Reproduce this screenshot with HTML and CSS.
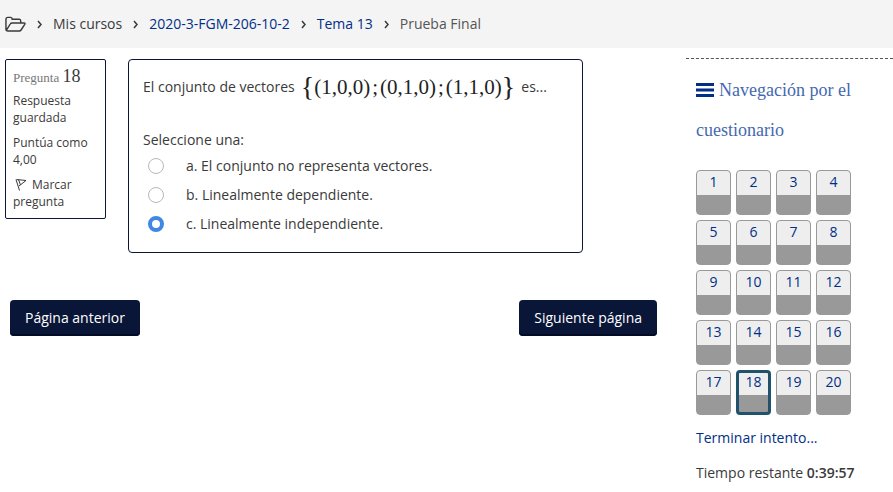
FILE: index.html
```html
<!DOCTYPE html>
<html lang="es">
<head>
<meta charset="utf-8">
<meta name="viewport" content="width=device-width, initial-scale=1">
<title>Prueba Final</title>
<link rel="stylesheet" href="styles.css">
</head>
<body>
<nav class="breadcrumb" aria-label="Ruta">
  <svg class="folder" viewBox="0 0 22 17" aria-hidden="true"><path d="M1 14V3Q1 1 3 1h3q1.500 0 1.500 2h7.500q1.500 0 1.500 2v2M1.500 14.500 5.500 8Q6 7 7.500 7H20q1.500 0 .7 1.300L17 14q-.8 1.300-2 1.300H3q-2 0-2-2"/></svg>
  <svg class="chevron" viewBox="0 0 5 9" aria-hidden="true"><path d="m1 1 3 3.500L1 8"/></svg>
  <span>Mis cursos</span>
  <svg class="chevron" viewBox="0 0 5 9" aria-hidden="true"><path d="m1 1 3 3.500L1 8"/></svg>
  <a href="#curso">2020-3-FGM-206-10-2</a>
  <svg class="chevron" viewBox="0 0 5 9" aria-hidden="true"><path d="m1 1 3 3.500L1 8"/></svg>
  <a href="#tema">Tema 13</a>
  <svg class="chevron" viewBox="0 0 5 9" aria-hidden="true"><path d="m1 1 3 3.500L1 8"/></svg>
  <span class="current">Prueba Final</span>
</nav>
<div class="page">
  <main>
    <form>
      <div class="question">
        <section class="info">
          <h3>Pregunta <span>18</span></h3>
          <p>Respuesta guardada</p>
          <p>Puntúa como 4,00</p>
          <p><svg class="flag" viewBox="0 0 12 13" aria-hidden="true"><path d="M1 1.500 4.500 12.500M1.500 1.500 11 2.500 4 8M3.500 1.500 5.500 7"/></svg>Marcar pregunta</p>
        </section>
        <fieldset class="content">
          <p class="statement">El conjunto de vectores <span class="formula"><span class="brace">{</span>(1,0,0)<i>;</i>(0,1,0)<i>;</i>(1,1,0)<span class="brace">}</span></span> es...</p>
          <p class="prompt">Seleccione una:</p>
          <label class="option"><input type="radio" name="answer"><span>a. El conjunto no representa vectores.</span></label>
          <label class="option"><input type="radio" name="answer"><span>b. Linealmente dependiente.</span></label>
          <label class="option"><input type="radio" name="answer" checked><span>c. Linealmente independiente.</span></label>
        </fieldset>
      </div>
      <div class="actions">
        <button type="button">Página anterior</button>
        <button type="button">Siguiente página</button>
      </div>
    </form>
  </main>
  <aside>
    <h2><svg class="bars" viewBox="0 0 18 14" aria-hidden="true"><path d="M0 0h18v3H0zM0 5.500h18v3H0zM0 11h18v3H0z"/></svg>Navegación por el cuestionario</h2>
    <div class="numbers">
      <a href="#1">1</a><a href="#2">2</a><a href="#3">3</a><a href="#4">4</a>
      <a href="#5">5</a><a href="#6">6</a><a href="#7">7</a><a href="#8">8</a>
      <a href="#9">9</a><a href="#10">10</a><a href="#11">11</a><a href="#12">12</a>
      <a href="#13">13</a><a href="#14">14</a><a href="#15">15</a><a href="#16">16</a>
      <a href="#17">17</a><a href="#18" class="active" aria-current="page">18</a><a href="#19">19</a><a href="#20">20</a>
    </div>
    <a class="finish" href="#terminar">Terminar intento...</a>
    <p class="timer">Tiempo restante <b>0:39:57</b></p>
  </aside>
</div>
</body>
</html>
```
FILE: styles.css
```css
* { box-sizing: border-box; }
body {
  margin: 0;
  background: #fff;
  color: #3a3a3a;
  font: 14px/20px "Open Sans", "Noto Sans", sans-serif;
}
a { color: #002f87; text-decoration: none; }
p, h2, h3 { margin: 0; }
.breadcrumb {
  display: flex;
  align-items: center;
  gap: 11px;
  height: 48px;
  padding: 0 5px;
  background: #f4f4f4;
}
.folder, .chevron, .flag { fill: none; stroke: #3a3a3a; }
.folder { width: 21px; height: 17px; stroke-width: 1.5; }
.chevron { width: 5px; height: 9px; stroke-width: 1.5; }
.current { color: #555; }
.page {
  display: grid;
  grid-template-columns: minmax(0, 1fr) 207px;
  gap: 16px;
}
main { padding: 11px 0 0 5px; }
.question {
  display: flex;
  align-items: flex-start;
  gap: 22px;
  padding-right: 87px;
}
.info {
  flex: 0 0 101px;
  padding: 6px 7px 8px;
  border: 1px solid #0a1538;
  border-radius: 2px;
  font-size: 12px;
  line-height: 17px;
}
.info p { margin-top: 8px; }
.info p:first-of-type { margin-top: 4px; }
.info h3 {
  color: #777;
  font: 13px/20px "Roboto Slab", "Liberation Serif", serif;
}
.info h3 span { color: #3a3a3a; font-size: 18px; }
.flag { width: 12px; height: 13px; margin: 0 5px 0 2px; vertical-align: -2px; }
.content {
  flex: 1;
  min-width: 0;
  margin: 0;
  padding: 10px 14px 18px;
  border: 1px solid #0a1538;
  border-radius: 4px;
}
.statement {
  display: flex;
  align-items: center;
  gap: 6px;
  height: 34px;
  white-space: nowrap;
}
.formula {
  display: flex;
  align-items: center;
  color: #222;
  font: 21px/32px "Liberation Serif", serif;
}
.formula i { padding: 0 2px; font-style: normal; }
.brace { font-size: 28px; }
.prompt { margin: 26px 0 6px; }
.option {
  display: flex;
  align-items: center;
  gap: 22px;
  height: 20px;
  margin: 0 0 9px 5px;
}
.option:last-child { margin-bottom: 0; }
.option input {
  appearance: none;
  width: 16px;
  height: 16px;
  margin: 0;
  border: 1px solid #bcb8b4;
  border-radius: 50%;
  background: #fff;
}
.option input:checked { border: 4px solid #3f87e5; }
.actions {
  display: flex;
  justify-content: space-between;
  padding: 47px 13px 0 5px;
}
button {
  height: 36px;
  padding: 0 15px;
  border: 0;
  border-radius: 4px;
  background: #091638;
  box-shadow: inset 0 -2px #030c25;
  color: #fff;
  font: inherit;
}
aside {
  margin-top: 10px;
  padding: 11px 10px 0;
  border-top: 1px dashed #555;
}
h2 {
  color: #4469b0;
  font: 18px/40px "Roboto Slab", "Liberation Serif", serif;
}
.bars { width: 18px; height: 14px; margin-right: 5px; fill: #002f87; vertical-align: -1px; }
.numbers {
  display: grid;
  grid-template-columns: repeat(4, 35px);
  gap: 5px;
  padding-top: 20px;
}
.numbers a {
  height: 45px;
  border: 1px solid #999;
  border-radius: 4px;
  background: linear-gradient(#eee 24px, #999 24px);
  line-height: 22px;
  text-align: center;
}
.numbers .active {
  border: 3px solid #20536b;
  background: linear-gradient(#eee 22px, #999 22px);
  line-height: 18px;
}
.finish { display: block; margin-top: 13px; }
.timer { margin-top: 15px; }
.timer b { font-weight: 600; }
```
